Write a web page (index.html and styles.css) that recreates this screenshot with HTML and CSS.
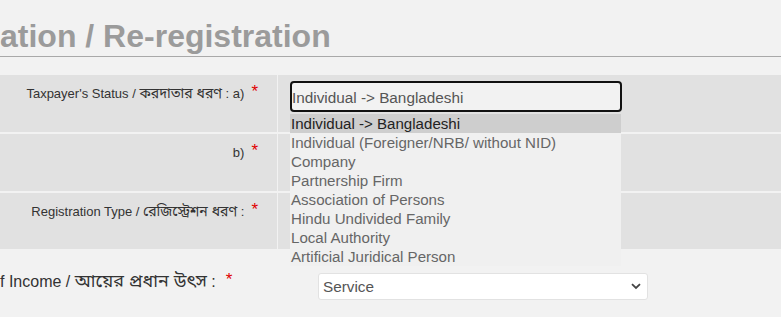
FILE: index.html
```html
<!DOCTYPE html>
<html>
<head>
<meta charset="utf-8">
<link rel="stylesheet" href="styles.css">
</head>
<body>
<div class="page">
  <h1 class="title">ation / Re-registration</h1>
  <div class="grid">
    <div class="row r1">
      <div class="label">Taxpayer's Status / <span class="bn">করদাতার ধরণ</span> : a)<span class="req">*</span></div>
      <div class="field">
        <div class="select-wrap">
          <div class="select focused">Individual -&gt; Bangladeshi</div>
          <ul class="options">
            <li class="active">Individual -&gt; Bangladeshi</li>
            <li>Individual (Foreigner/NRB/ without NID)</li>
            <li>Company</li>
            <li>Partnership Firm</li>
            <li>Association of Persons</li>
            <li>Hindu Undivided Family</li>
            <li>Local Authority</li>
            <li>Artificial Juridical Person</li>
          </ul>
        </div>
      </div>
    </div>
    <div class="row r2">
      <div class="label">b)<span class="req">*</span></div>
      <div class="field"></div>
    </div>
    <div class="row r3">
      <div class="label">Registration Type / <span class="bn">রেজিস্ট্রেশন ধরণ</span> :<span class="req">*</span></div>
      <div class="field"></div>
    </div>
  </div>
  <div class="income">
    <div class="income-label">f Income / <span class="bn">আয়ের প্রধান উৎস</span> :<span class="req big">*</span></div>
    <div class="plain-select">
      <span>Service</span>
      <svg class="chev" width="10" height="7" viewBox="0 0 10 7"><path d="M1 1.2 L5 5 L9 1.2" fill="none" stroke="#444" stroke-width="1.8"/></svg>
    </div>
  </div>
</div>
</body>
</html>
```
FILE: styles.css
```css
html, body {
  margin: 0;
  padding: 0;
  background: #f2f2f2;
}
body {
  font-family: "Liberation Sans", Arial, "Noto Sans Bengali", "Noto Sans", sans-serif;
  width: 781px;
  height: 317px;
  overflow: hidden;
}
.page {
  position: relative;
}
.title {
  margin: 0;
  padding: 17px 0 0 0;
  height: 39px;
  font-size: 32px;
  line-height: 38px;
  font-weight: bold;
  color: #9b9b9b;
  border-bottom: 1px solid #a9a9a9;
  white-space: nowrap;
}
.grid {
  margin-top: 18px;
  display: flex;
  flex-direction: column;
  gap: 2px;
}
.row {
  display: grid;
  grid-template-columns: 277px 1fr;
  column-gap: 1px;
  height: 57px;
}
.r3 { height: 56px; }
.label {
  background: #e1e1e1;
  text-align: right;
  font-size: 13px;
  color: #333;
  padding: 8px 19px 0 0;
  white-space: nowrap;
}
.bn {
  font-size: 1.08em;
}
.req {
  color: #e00000;
  font-size: 17px;
  margin-left: 7px;
  position: relative;
  top: -1px;
}
.field {
  background: #e1e1e1;
  position: relative;
}
.r1 .field {
  padding: 6px 0 0 12px;
}
.select-wrap {
  position: relative;
  width: 332px;
}
.select {
  box-sizing: border-box;
  height: 31px;
  border: 2px solid #111;
  border-radius: 4px;
  background: #f2f2f2;
  color: #555;
  font-size: 15.3px;
  line-height: 29px;
  padding-left: 0;
  white-space: nowrap;
}
.options {
  position: absolute;
  z-index: 5;
  left: 0;
  top: 33px;
  width: 331px;
  margin: 0;
  padding: 0;
  list-style: none;
  background: #f0f0f0;
}
.options li {
  height: 19px;
  line-height: 19px;
  font-size: 15.1px;
  color: #666;
  padding-left: 1px;
  white-space: nowrap;
}
.options li.active {
  background: #cecece;
  color: #222;
}
.income {
  display: flex;
  align-items: flex-start;
  margin-top: 16px;
}
.income-label {
  width: 235px;
  font-size: 16px;
  color: #333;
  padding-top: 6px;
  white-space: nowrap;
  box-sizing: border-box;
}
.income-label .bn {
  font-size: 1.12em;
}
.req.big {
  margin-left: 10px;
  top: -2px;
}
.plain-select {
  box-sizing: border-box;
  margin-left: 83px;
  margin-top: 8px;
  width: 330px;
  height: 27px;
  background: #fff;
  border: 1px solid #e2e2e2;
  border-radius: 3px;
  display: flex;
  align-items: center;
  justify-content: space-between;
  padding: 0 6px 0 4px;
  font-size: 15.3px;
  color: #555;
}
.chev { display: block; }
```
